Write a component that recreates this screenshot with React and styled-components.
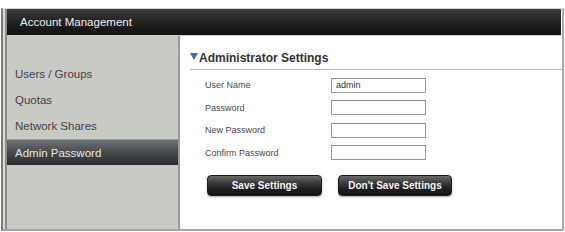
import React from "react";
import styled, { createGlobalStyle } from "styled-components";

const Global = createGlobalStyle`
  html, body { margin: 0; padding: 0; background: #fff; }
  body { font-family: "Liberation Sans", Arial, sans-serif; }
  * { box-sizing: border-box; }
`;

const Page = styled.div`
  width: 565px;
  height: 232px;
  padding: 8px 1px 1px 1px;
  background: #fff;
`;

const Frame = styled.div`
  height: 100%;
  border-left: 2px solid #7a7a7a;
  border-right: 2px solid #a9a9a9;
  border-bottom: 2px solid #a5a5a5;
  border-top: 1px solid #d8d8d8;
  padding-left: 2px;
  background: #d9d9d6;
  display: flex;
`;

const Inner = styled.div`
  flex: 1;
  border-left: 2px solid #8c8c8c;
  display: flex;
  flex-direction: column;
  background: #fff;
`;

const Header = styled.div`
  height: 27px;
  flex: none;
  background: linear-gradient(#3c3c3c 0%, #262626 40%, #111 100%);
  color: #eeeeee;
  font-size: 11.5px;
  display: flex;
  align-items: center;
  padding-left: 13px;
  margin-right: 1px;
  border-bottom: 1px solid #c9c9c9;
`;

const Body = styled.div`
  flex: 1;
  display: flex;
  min-height: 0;
`;

const Sidebar = styled.div`
  width: 173px;
  flex: none;
  background: #c9c9c6;
  border-right: 2px solid #9b9b9b;
  padding-top: 25px;
  display: flex;
  flex-direction: column;
`;

const NavItem = styled.div`
  height: 26px;
  display: flex;
  align-items: center;
  padding-left: 8px;
  font-size: 11.5px;
  color: ${(p) => (p.$active ? "#e6e6e6" : "#444")};
  background: ${(p) =>
    p.$active ? "linear-gradient(#6e7274 0%, #4a4d50 45%, #2a2c2e 100%)" : "transparent"};
  border-top: ${(p) => (p.$active ? "1px solid #9a9c9c" : "none")};
`;

const Content = styled.div`
  flex: 1;
  background: #fff;
  padding: 15px 0 0 9px;
  display: flex;
  flex-direction: column;
`;

const Heading = styled.div`
  display: flex;
  align-items: center;
  gap: 1px;
  font-size: 12px;
  font-weight: bold;
  color: #333;
  height: 19px;
  padding-bottom: 4px;
  border-bottom: 1px solid #b9b9b9;
  margin-left: 1px;
`;

const Triangle = styled.span`
  width: 0;
  height: 0;
  border-left: 4px solid transparent;
  border-right: 4px solid transparent;
  border-top: 7px solid #3b6fb0;
  margin-top: -3px;
`;

const Form = styled.div`
  padding: 4px 0 0 16px;
  display: flex;
  flex-direction: column;
`;

const Row = styled.div`
  height: 22.5px;
  display: grid;
  grid-template-columns: 126px 95px;
  align-items: center;
`;

const Label = styled.span`
  font-size: 9px;
  color: #4a4a4a;
`;

const Input = styled.div`
  height: 15px;
  border: 1px solid #9a9a9a;
  border-top-color: #8a8a8a;
  background: #fff;
  font-size: 9px;
  color: #333;
  padding-left: 4px;
  display: flex;
  align-items: center;
`;

const Buttons = styled.div`
  display: flex;
  gap: 16px;
  padding: 11px 0 0 18px;
`;

const Button = styled.div`
  width: ${(p) => p.$w}px;
  height: 21px;
  border-radius: 4px;
  border: 1px solid #1c1c1c;
  background: linear-gradient(#6a6a6a 0%, #3c3c3c 35%, #202020 65%, #121212 100%);
  box-shadow: 0 1px 2px rgba(0, 0, 0, 0.35);
  color: #f4f4f4;
  font-size: 10px;
  font-weight: bold;
  display: flex;
  align-items: center;
  justify-content: center;
`;

const fields = [
  { label: "User Name", value: "admin" },
  { label: "Password", value: "" },
  { label: "New Password", value: "" },
  { label: "Confirm Password", value: "" },
];

const nav = ["Users / Groups", "Quotas", "Network Shares", "Admin Password"];

export default function App() {
  return (
    <>
      <Global />
      <Page>
        <Frame>
          <Inner>
            <Header>Account Management</Header>
            <Body>
              <Sidebar>
                {nav.map((n) => (
                  <NavItem key={n} $active={n === "Admin Password"}>
                    {n}
                  </NavItem>
                ))}
              </Sidebar>
              <Content>
                <Heading>
                  <Triangle />
                  Administrator Settings
                </Heading>
                <Form>
                  {fields.map((f) => (
                    <Row key={f.label}>
                      <Label>{f.label}</Label>
                      <Input>{f.value}</Input>
                    </Row>
                  ))}
                </Form>
                <Buttons>
                  <Button $w={115}>Save Settings</Button>
                  <Button $w={114}>Don't Save Settings</Button>
                </Buttons>
              </Content>
            </Body>
          </Inner>
        </Frame>
      </Page>
    </>
  );
}
